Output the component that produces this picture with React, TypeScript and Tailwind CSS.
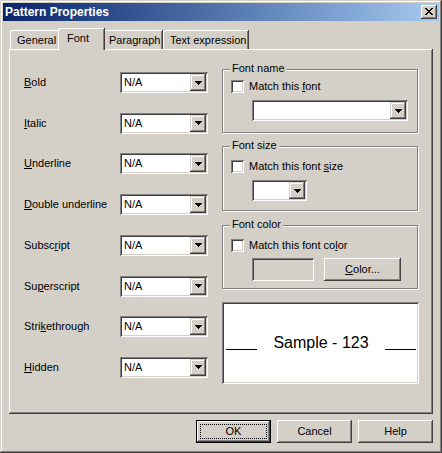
import React from "react";

const RAISED =
  "shadow-[inset_-1px_-1px_#404040,inset_1px_1px_#fff,inset_-2px_-2px_#808080,inset_2px_2px_#d4d0c8]";
const RAISED2 =
  "shadow-[inset_-1px_-1px_#404040,inset_1px_1px_#d4d0c8,inset_-2px_-2px_#808080,inset_2px_2px_#fff]";
const SUNKEN =
  "shadow-[inset_1px_1px_#808080,inset_-1px_-1px_#fff,inset_2px_2px_#404040,inset_-2px_-2px_#d4d0c8]";

function Arrow() {
  return (
    <svg width="7" height="4" viewBox="0 0 7 4" shapeRendering="crispEdges">
      <path d="M0 0h7v1H0zM1 1h5v1H1zM2 2h3v1H2zM3 3h1v1H3z" fill="#000" />
    </svg>
  );
}

function Combo({ className, value }: { className: string; value?: string }) {
  return (
    <div className={`flex h-[21px] items-center bg-white ${SUNKEN} ${className}`}>
      <span className="flex-1 pl-[4px] text-[11px] leading-[13px] text-black">{value}</span>
      <div className={`mr-[2px] flex h-[17px] w-[16px] items-center justify-center bg-[#d4d0c8] ${RAISED2}`}>
        <Arrow />
      </div>
    </div>
  );
}

function Check() {
  return <div className={`h-[13px] w-[13px] shrink-0 bg-white ${SUNKEN}`} />;
}

function U({ children }: { children: React.ReactNode }) {
  return <span className="underline underline-offset-[1px]">{children}</span>;
}

function Group({
  title,
  className,
  children,
}: {
  title: string;
  className: string;
  children: React.ReactNode;
}) {
  return (
    <div
      className={`relative w-[196px] border border-[#808080] shadow-[1px_1px_0_#fff,inset_1px_1px_0_#fff] ${className}`}
    >
      <span className="absolute left-[7px] top-[-8px] bg-[#d4d0c8] px-[2px] text-[11px] leading-[13px]">
        {title}
      </span>
      {children}
    </div>
  );
}

const rows: React.ReactNode[] = [
  <><U>B</U>old</>,
  <><U>I</U>talic</>,
  <><U>U</U>nderline</>,
  <><U>D</U>ouble underline</>,
  <>Subsc<U>r</U>ipt</>,
  <>Su<U>p</U>erscript</>,
  <>Stri<U>k</U>ethrough</>,
  <><U>H</U>idden</>,
];

function Button({ children, def }: { children: React.ReactNode; def?: boolean }) {
  if (def) {
    return (
      <div className="flex h-[23px] w-[75px] border border-black bg-[#d4d0c8]">
        <div className={`flex flex-1 p-[3px] ${RAISED}`}>
          <div className="flex flex-1 items-center justify-center border border-dotted border-black text-[11px] leading-[13px]">
            {children}
          </div>
        </div>
      </div>
    );
  }
  return (
    <div
      className={`flex h-[23px] w-[75px] items-center justify-center bg-[#d4d0c8] text-[11px] leading-[13px] ${RAISED}`}
    >
      {children}
    </div>
  );
}

export default function App() {
  return (
    <div
      className={`flex h-[453px] w-[442px] flex-col bg-[#d4d0c8] p-[3px] font-['Liberation_Sans',Arial,sans-serif] text-black shadow-[inset_-1px_-1px_#404040,inset_1px_1px_#d4d0c8,inset_-2px_-2px_#808080,inset_2px_2px_#fff]`}
    >
      {/* Title bar */}
      <div className="flex h-[18px] items-center bg-gradient-to-r from-[#0a246a] to-[#a6caf0] pl-[2px]">
        <span className="flex-1 text-[12px] font-bold leading-[18px] text-white">Pattern Properties</span>
        <div className={`mr-[2px] flex h-[14px] w-[16px] items-center justify-center bg-[#d4d0c8] ${RAISED}`}>
          <svg width="8" height="7" viewBox="0 0 8 7" shapeRendering="crispEdges" className="-ml-[1px] -mt-[1px]">
            <path
              d="M0 0h2v1H0zM6 0h2v1H6zM1 1h2v1H1zM5 1h2v1H5zM2 2h4v1H2zM3 3h2v1H3zM2 4h4v1H2zM1 5h2v1H1zM5 5h2v1H5zM0 6h2v1H0zM6 6h2v1H6z"
              fill="#000"
            />
          </svg>
        </div>
      </div>

      <div className="flex flex-col px-[6px]">
        {/* Tabs */}
        <div className="flex h-[28px] items-end pl-[1px] text-[11px] leading-[13px]">
          <div className="h-[19px] w-[50px] rounded-tl-[2px] pl-[7px] pt-[4px] shadow-[inset_1px_1px_#fff,inset_-1px_0_#d4d0c8]">
            General
          </div>
          <div className="relative z-10 -mx-[2px] -mb-[1px] h-[22px] w-[47px] rounded-tl-[2px] bg-[#d4d0c8] pl-[9px] pt-[4px] shadow-[inset_-1px_0_#404040,inset_1px_1px_#fff,inset_-2px_0_#808080]">
            Font
          </div>
          <div className="h-[19px] w-[60px] rounded-tl-[2px] pl-[6px] pt-[4px] shadow-[inset_-1px_0_#404040,inset_1px_1px_#fff,inset_-2px_0_#808080]">
            Paragraph
          </div>
          <div className="h-[19px] w-[86px] rounded-tl-[2px] pl-[7px] pt-[4px] shadow-[inset_-1px_0_#404040,inset_1px_1px_#fff,inset_-2px_0_#808080]">
            Text expression
          </div>
        </div>

        {/* Panel */}
        <div
          className={`flex h-[365px] items-start pl-[15px] shadow-[inset_-1px_-1px_#404040,inset_1px_1px_#fff,inset_-2px_-2px_#808080]`}
        >
          <div className="mt-[23px] flex h-[306px] flex-col justify-between">
            {rows.map((r, i) => (
              <div key={i} className="flex h-[21px] items-center">
                <span className="w-[96px] text-[11px] leading-[13px]">{r}</span>
                <Combo className="w-[88px]" value="N/A" />
              </div>
            ))}
          </div>

          <div className="ml-[14px] mt-[20px] flex flex-col">
            <Group title="Font name" className="h-[64px] pl-[8px] pt-[10px]">
              <div className="flex h-[13px] items-center gap-[5px] text-[11px] leading-[13px]">
                <Check />
                <span>
                  Match this <U>f</U>ont
                </span>
              </div>
              <Combo className="ml-[21px] mt-[7px] w-[156px]" />
            </Group>

            <Group title="Font size" className="mt-[13px] h-[65px] pl-[8px] pt-[13px]">
              <div className="flex h-[13px] items-center gap-[5px] text-[11px] leading-[13px]">
                <Check />
                <span>
                  Match this font <U>s</U>ize
                </span>
              </div>
              <Combo className="ml-[21px] mt-[7px] w-[55px]" />
            </Group>

            <Group title="Font color" className="mt-[14px] h-[64px] pl-[8px] pt-[13px]">
              <div className="flex h-[13px] items-center gap-[5px] text-[11px] leading-[13px]">
                <Check />
                <span>
                  Match this font co<U>l</U>or
                </span>
              </div>
              <div className="ml-[21px] mt-[6px] flex">
                <div className={`h-[23px] w-[62px] bg-[#d4d0c8] ${SUNKEN}`} />
                <div
                  className={`ml-[10px] flex h-[23px] w-[77px] items-center justify-center text-[11px] leading-[13px] ${RAISED}`}
                >
                  <span>
                    <U>C</U>olor...
                  </span>
                </div>
              </div>
            </Group>

            <div
              className={`mt-[13px] flex h-[82px] w-[197px] items-center justify-between bg-white pl-[4px] pr-[3px] ${SUNKEN}`}
            >
              <div className="mt-[12px] h-[1px] w-[31px] bg-black" />
              <span className="text-[16px] leading-[18px] font-['Liberation_Sans',Arial,sans-serif]">Sample - 123</span>
              <div className="mt-[12px] h-[1px] w-[31px] bg-black" />
            </div>
          </div>
        </div>

        {/* Buttons */}
        <div className="mt-[6px] flex justify-end gap-[6px]">
          <Button def>OK</Button>
          <Button>Cancel</Button>
          <Button>Help</Button>
        </div>
      </div>
    </div>
  );
}
